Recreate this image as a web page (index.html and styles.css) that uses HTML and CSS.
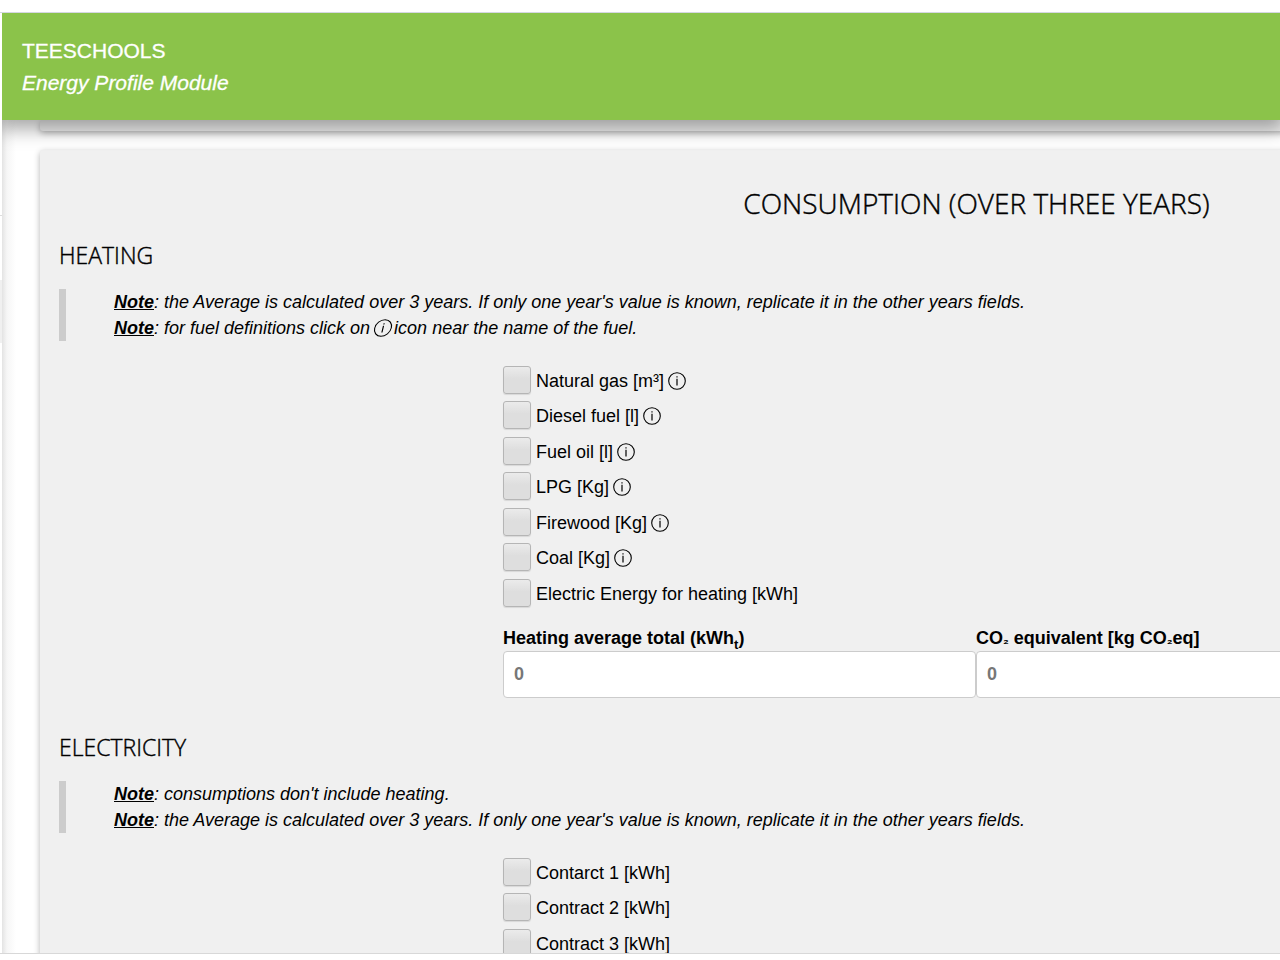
FILE: index.html
```html
<!DOCTYPE html>
<html lang="en">
<head>
<meta charset="utf-8">
<meta name="viewport" content="width=device-width, initial-scale=1">
<title>TEESCHOOLS - Energy Profile Module</title>
<link rel="stylesheet" href="styles.css">
</head>
<body>
<svg class="sprite" aria-hidden="true">
  <symbol id="info" viewBox="0 0 18 18">
    <circle cx="9" cy="9" r="8.3" fill="none" stroke="currentColor" stroke-width="1.1"/>
    <path d="M9 6.8v6.6M9 4.2v1.4" fill="none" stroke="currentColor" stroke-width="1.2"/>
  </symbol>
</svg>
<div class="window">
  <div class="strip"></div>
  <div class="frame">
    <div class="rail"><span class="rail-mark"></span></div>
    <div class="app">
      <header class="header">
        <h1 class="brand">TEESCHOOLS</h1>
        <p class="module">Energy Profile Module</p>
      </header>
      <main class="workspace">
        <div class="card card-previous"></div>
        <section class="card">
          <h2 class="title">CONSUMPTION (OVER THREE YEARS)</h2>

          <h3 class="subtitle">HEATING</h3>
          <blockquote class="notes">
            <p><strong>Note</strong>: the Average is calculated over 3 years. If only one year's value is known, replicate it in the other years fields.</p>
            <p><strong>Note</strong>: for fuel definitions click on <svg class="icon icon-slanted" aria-hidden="true"><use href="#info"/></svg> icon near the name of the fuel.</p>
          </blockquote>
          <div class="fields">
            <ul class="options">
              <li><input type="checkbox" id="gas"><label for="gas">Natural gas [m³]</label><button type="button" class="info" aria-label="About natural gas"><svg class="icon"><use href="#info"/></svg></button></li>
              <li><input type="checkbox" id="diesel"><label for="diesel">Diesel fuel [l]</label><button type="button" class="info" aria-label="About diesel fuel"><svg class="icon"><use href="#info"/></svg></button></li>
              <li><input type="checkbox" id="oil"><label for="oil">Fuel oil [l]</label><button type="button" class="info" aria-label="About fuel oil"><svg class="icon"><use href="#info"/></svg></button></li>
              <li><input type="checkbox" id="lpg"><label for="lpg">LPG [Kg]</label><button type="button" class="info" aria-label="About LPG"><svg class="icon"><use href="#info"/></svg></button></li>
              <li><input type="checkbox" id="wood"><label for="wood">Firewood [Kg]</label><button type="button" class="info" aria-label="About firewood"><svg class="icon"><use href="#info"/></svg></button></li>
              <li><input type="checkbox" id="coal"><label for="coal">Coal [Kg]</label><button type="button" class="info" aria-label="About coal"><svg class="icon"><use href="#info"/></svg></button></li>
              <li><input type="checkbox" id="electric"><label for="electric">Electric Energy for heating [kWh]</label></li>
            </ul>
            <div class="totals">
              <div class="total">
                <label for="average">Heating average total (kWh<sub>t</sub>)</label>
                <input type="text" id="average" placeholder="0">
              </div>
              <div class="total">
                <label for="co2">CO<small>₂</small> equivalent [kg CO<small>₂</small>eq]</label>
                <input type="text" id="co2" placeholder="0">
              </div>
            </div>
          </div>

          <h3 class="subtitle">ELECTRICITY</h3>
          <blockquote class="notes">
            <p><strong>Note</strong>: consumptions don't include heating.</p>
            <p><strong>Note</strong>: the Average is calculated over 3 years. If only one year's value is known, replicate it in the other years fields.</p>
          </blockquote>
          <div class="fields">
            <ul class="options">
              <li><input type="checkbox" id="contract1"><label for="contract1">Contarct 1 [kWh]</label></li>
              <li><input type="checkbox" id="contract2"><label for="contract2">Contract 2 [kWh]</label></li>
              <li><input type="checkbox" id="contract3"><label for="contract3">Contract 3 [kWh]</label></li>
            </ul>
          </div>
        </section>
      </main>
    </div>
  </div>
  <div class="footer-strip"></div>
</div>
</body>
</html>
```
FILE: styles.css
```css
* {
  box-sizing: border-box;
}

body {
  margin: 0;
  background: #fff;
  color: #000;
  font: 18px/26px "Liberation Sans", Arial, sans-serif;
}

h1, h2, h3, p, ul, blockquote {
  margin: 0;
  padding: 0;
}

.sprite {
  display: none;
}

.window {
  display: flex;
  flex-direction: column;
  height: 100vh;
  overflow: hidden;
}

.strip {
  flex: none;
  height: 13px;
  border-bottom: 1px solid #d5d7e2;
}

.frame {
  display: flex;
  flex: 1;
  min-height: 0;
}

.footer-strip {
  flex: none;
  height: 7px;
  border-top: 1px solid #d8d8d8;
}

.rail {
  flex: none;
  width: 2px;
  padding-top: 202px;
}

.rail-mark {
  display: block;
  height: 128px;
  border-top: 1px solid #ddd;
  background: linear-gradient(#fff 64px, #f0f0f0 64px);
}

.app {
  flex: 1;
  min-width: 0;
  overflow: hidden;
  background: linear-gradient(90deg, #e3e3e3, #f6f6f6 5px, #fff 14px);
}

.header {
  position: relative;
  z-index: 1;
  padding: 22px 20px 21px;
  background: #8bc34a;
  box-shadow: 0 5px 18px 4px rgba(0, 0, 0, 0.35);
  color: #fff;
}

.brand,
.module {
  font-size: 21px;
  font-weight: 400;
  line-height: 32px;
  -webkit-text-stroke: 0.3px;
}

.module {
  font-style: italic;
}

.workspace {
  width: 150%;
  padding: 0 6px 0 38px;
}

.card {
  padding: 32px 19px;
  border-radius: 3px;
  background: #f0f0f0;
  box-shadow: 0 2px 6px rgba(0, 0, 0, 0.3);
}

.card-previous {
  height: 11px;
  margin-bottom: 19px;
  padding: 0;
}

.title,
.subtitle {
  font-family: "Open Sans", "Noto Sans", sans-serif;
  font-weight: 300;
  -webkit-text-stroke: 0.4px;
}

.title {
  font-size: 28px;
  line-height: 42px;
  text-align: center;
}

.subtitle {
  margin-bottom: 18px;
  font-size: 23px;
  line-height: 32px;
}

.title + .subtitle {
  margin-top: 15px;
}

.notes {
  padding-left: 48px;
  border-left: 7px solid #ccc;
  font-style: italic;
}

.notes strong {
  text-decoration: underline;
}

.fields {
  margin: 25px 0 33px;
  padding-left: 444px;
}

.options {
  list-style: none;
}

.options li {
  display: flex;
  align-items: center;
  height: 35px;
  padding-bottom: 7px;
}

.options li:nth-child(even) {
  height: 36px;
  padding-bottom: 8px;
}

.options input {
  appearance: none;
  flex: none;
  width: 28px;
  height: 28px;
  margin: 0 5px 0 0;
  border: 1px solid #b5b5b5;
  border-radius: 3px;
  background: linear-gradient(#ebebeb, #dedede 45%, #dedede);
  box-shadow: 0 1px 1px rgba(0, 0, 0, 0.1);
}

.options label {
  padding-top: 2px;
}

.info {
  display: flex;
  margin: 0 0 0 4px;
  padding: 2px 0 0;
  border: 0;
  background: none;
  color: inherit;
}

.icon {
  width: 18px;
  height: 18px;
}

.icon-slanted {
  margin: 0 -3px 0 -1px;
  transform: skewX(-14deg);
  vertical-align: -3px;
}

.totals {
  display: flex;
  margin-top: 11px;
}

.total {
  width: 34%;
  font-weight: 700;
}

.total label {
  display: block;
}

.total sub,
.total small {
  font-size: 13px;
  line-height: 0;
}

.total input {
  display: block;
  width: 100%;
  height: 47px;
  padding: 0 10px;
  border: 1px solid #ccc;
  border-radius: 4px;
  background: #fff;
  font: inherit;
}

.total input::placeholder {
  color: #777;
}
```
